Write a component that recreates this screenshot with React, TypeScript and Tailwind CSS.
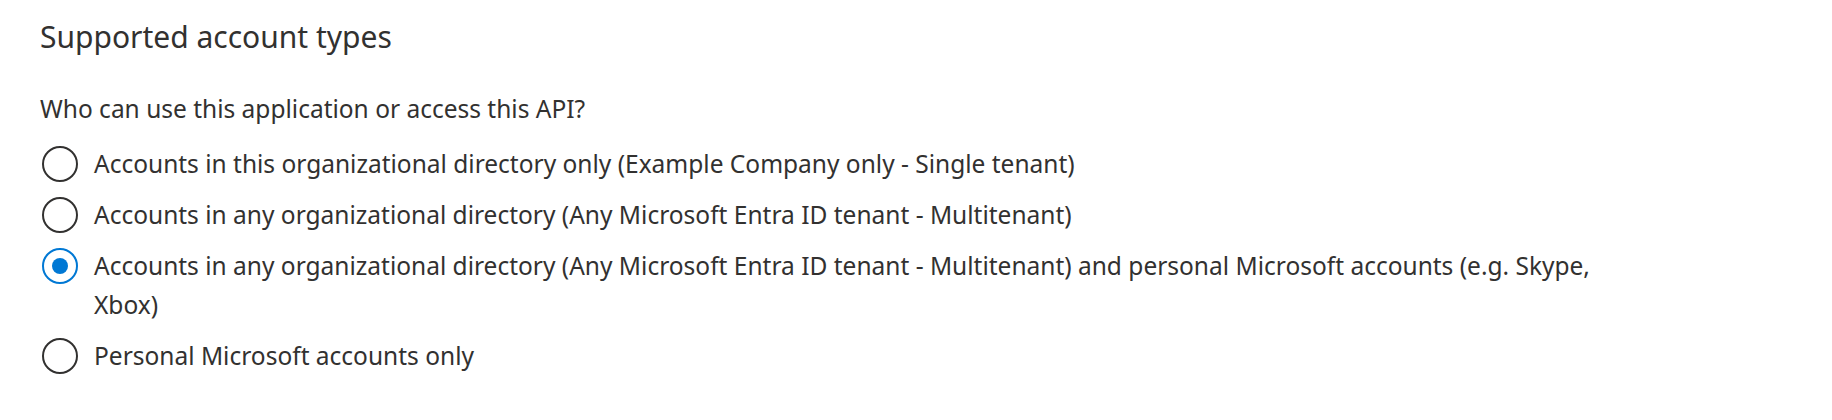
import React, { useState } from 'react';

const OPTIONS = [
  { id: 'single', label: 'Accounts in this organizational directory only (Example Company only - Single tenant)' },
  { id: 'multi', label: 'Accounts in any organizational directory (Any Microsoft Entra ID tenant - Multitenant)' },
  {
    id: 'multi-personal',
    label:
      'Accounts in any organizational directory (Any Microsoft Entra ID tenant - Multitenant) and personal Microsoft accounts (e.g. Skype, Xbox)',
  },
  { id: 'personal', label: 'Personal Microsoft accounts only' },
];

export default function App() {
  const [selected, setSelected] = useState('multi-personal');

  return (
    <div
      className="min-h-screen bg-white px-[40px] pt-[17px] text-[#323130]"
      style={{ fontFamily: "'Noto Sans', 'Open Sans', sans-serif" }}
    >
      <h2 className="text-[30px] leading-[40px] font-normal">Supported account types</h2>

      <p className="mt-[32px] text-[24.5px] leading-[39px]">Who can use this application or access this API?</p>

      {/* Choice group */}
      <div className="mt-[16px] flex flex-col gap-[12px]" role="radiogroup">
        {OPTIONS.map(opt => {
          const active = selected === opt.id;
          return (
            <div
              key={opt.id}
              role="radio"
              aria-checked={active}
              tabIndex={0}
              onClick={() => setSelected(opt.id)}
              className="flex items-start cursor-pointer"
            >
              <div className="h-[39px] flex items-center flex-shrink-0 ml-[2px]">
                <div
                  className={
                    active
                      ? 'w-[36px] h-[36px] rounded-full border-2 border-[#0078d4] flex items-center justify-center'
                      : 'w-[36px] h-[36px] rounded-full border-2 border-[#323130]'
                  }
                >
                  {active && <div className="w-[16px] h-[16px] rounded-full bg-[#0078d4]" />}
                </div>
              </div>
              <span className="ml-[16px] max-w-[1530px] text-[24.5px] leading-[39px]">{opt.label}</span>
            </div>
          );
        })}
      </div>
    </div>
  );
}
